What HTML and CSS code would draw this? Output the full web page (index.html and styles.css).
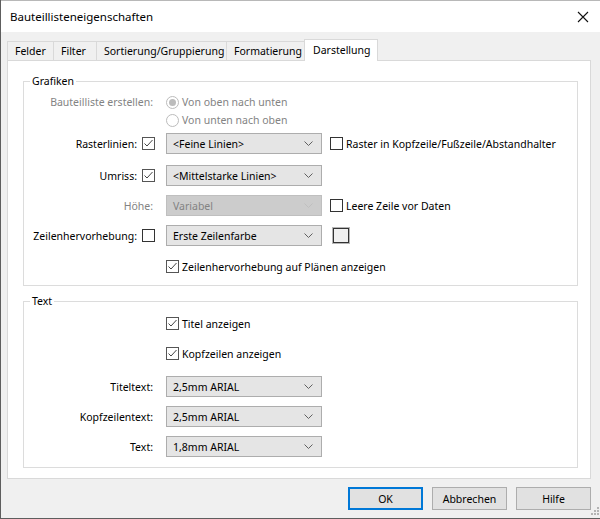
FILE: index.html
```html
<!DOCTYPE html>
<html lang="de">
<head>
<meta charset="utf-8">
<title>Bauteillisteneigenschaften</title>
<link rel="stylesheet" href="styles.css">
</head>
<body>
<div class="window">
  <div class="titlebar">
    <span class="title">Bauteillisteneigenschaften</span>
    <svg class="close" width="12" height="12" viewBox="0 0 12 12"><path d="M1 1L11 11M11 1L1 11" stroke="#111" stroke-width="1.1" fill="none"/></svg>
  </div>
  <div class="content">
    <div class="tabs">
      <div class="tab tab-felder">Felder</div>
      <div class="tab tab-filter">Filter</div>
      <div class="tab tab-sort">Sortierung/Gruppierung</div>
      <div class="tab tab-format">Formatierung</div>
      <div class="tab tab-active">Darstellung</div>
    </div>
    <div class="panel">
      <fieldset class="group group-graphics">
        <legend>Grafiken</legend>
        <div class="row row-radio row-first">
          <span class="label label-plain disabled">Bauteilliste erstellen:</span>
          <span class="radio disabled"><span class="radio-circle radio-checked"></span>Von oben nach unten</span>
        </div>
        <div class="row row-radio">
          <span class="label"></span>
          <span class="radio disabled"><span class="radio-circle"></span>Von unten nach oben</span>
        </div>
        <div class="row row-raster">
          <span class="label">Rasterlinien:<span class="cb cb-checked"><svg width="11" height="11" viewBox="0 0 11 11"><path d="M1.5 5.5L4 8L9.5 2" stroke="#444" stroke-width="1" fill="none"/></svg></span></span>
          <div class="select"><span>&lt;Feine Linien&gt;</span><svg class="chev" width="9" height="5" viewBox="0 0 9 5"><path d="M0.5 0.5L4.5 4.5L8.5 0.5" stroke="#606060" fill="none"/></svg></div>
          <span class="check"><span class="cb"></span>Raster in Kopfzeile/Fußzeile/Abstandhalter</span>
        </div>
        <div class="row row-outline">
          <span class="label">Umriss:<span class="cb cb-checked"><svg width="11" height="11" viewBox="0 0 11 11"><path d="M1.5 5.5L4 8L9.5 2" stroke="#444" stroke-width="1" fill="none"/></svg></span></span>
          <div class="select"><span>&lt;Mittelstarke Linien&gt;</span><svg class="chev" width="9" height="5" viewBox="0 0 9 5"><path d="M0.5 0.5L4.5 4.5L8.5 0.5" stroke="#606060" fill="none"/></svg></div>
          <span></span>
        </div>
        <div class="row row-std">
          <span class="label label-plain disabled">Höhe:</span>
          <div class="select select-disabled"><span>Variabel</span><svg class="chev" width="9" height="5" viewBox="0 0 9 5"><path d="M0.5 0.5L4.5 4.5L8.5 0.5" stroke="#bfbfbf" fill="none"/></svg></div>
          <span class="check"><span class="cb"></span>Leere Zeile vor Daten</span>
        </div>
        <div class="row row-std">
          <span class="label">Zeilenhervorhebung:<span class="cb"></span></span>
          <div class="select"><span>Erste Zeilenfarbe</span><svg class="chev" width="9" height="5" viewBox="0 0 9 5"><path d="M0.5 0.5L4.5 4.5L8.5 0.5" stroke="#606060" fill="none"/></svg></div>
          <span class="swatch"><span class="swatch-inner"></span></span>
        </div>
        <div class="row row-sheets">
          <span class="label"></span>
          <span class="check check-wide"><span class="cb cb-checked"><svg width="11" height="11" viewBox="0 0 11 11"><path d="M1.5 5.5L4 8L9.5 2" stroke="#444" stroke-width="1" fill="none"/></svg></span>Zeilenhervorhebung auf Plänen anzeigen</span>
        </div>
      </fieldset>

      <fieldset class="group group-text">
        <legend>Text</legend>
        <div class="row row-first">
          <span class="label"></span>
          <span class="check check-wide"><span class="cb cb-checked"><svg width="11" height="11" viewBox="0 0 11 11"><path d="M1.5 5.5L4 8L9.5 2" stroke="#444" stroke-width="1" fill="none"/></svg></span>Titel anzeigen</span>
        </div>
        <div class="row row-std">
          <span class="label"></span>
          <span class="check check-wide"><span class="cb cb-checked"><svg width="11" height="11" viewBox="0 0 11 11"><path d="M1.5 5.5L4 8L9.5 2" stroke="#444" stroke-width="1" fill="none"/></svg></span>Kopfzeilen anzeigen</span>
        </div>
        <div class="row row-font-first">
          <span class="label label-plain">Titeltext:</span>
          <div class="select"><span>2,5mm ARIAL</span><svg class="chev" width="9" height="5" viewBox="0 0 9 5"><path d="M0.5 0.5L4.5 4.5L8.5 0.5" stroke="#606060" fill="none"/></svg></div>
          <span></span>
        </div>
        <div class="row row-std">
          <span class="label label-plain">Kopfzeilentext:</span>
          <div class="select"><span>2,5mm ARIAL</span><svg class="chev" width="9" height="5" viewBox="0 0 9 5"><path d="M0.5 0.5L4.5 4.5L8.5 0.5" stroke="#606060" fill="none"/></svg></div>
          <span></span>
        </div>
        <div class="row row-std">
          <span class="label label-plain">Text:</span>
          <div class="select"><span>1,8mm ARIAL</span><svg class="chev" width="9" height="5" viewBox="0 0 9 5"><path d="M0.5 0.5L4.5 4.5L8.5 0.5" stroke="#606060" fill="none"/></svg></div>
          <span></span>
        </div>
      </fieldset>
    </div>
    <div class="buttons">
      <button class="btn btn-default">OK</button>
      <button class="btn">Abbrechen</button>
      <button class="btn">Hilfe</button>
    </div>
  </div>
  <svg class="grip" width="12" height="12" viewBox="0 0 12 12">
    <rect x="9" y="1" width="2" height="2" fill="#b4b4b4"/>
    <rect x="6" y="4" width="2" height="2" fill="#b4b4b4"/>
    <rect x="9" y="4" width="2" height="2" fill="#b4b4b4"/>
    <rect x="3" y="7" width="2" height="2" fill="#b4b4b4"/>
    <rect x="6" y="7" width="2" height="2" fill="#b4b4b4"/>
    <rect x="9" y="7" width="2" height="2" fill="#b4b4b4"/>
  </svg>
</div>
</body>
</html>
```

FILE: styles.css
```css
* { box-sizing: border-box; }
html, body { margin: 0; padding: 0; }
body {
  width: 600px;
  height: 519px;
  overflow: hidden;
  background: #f0f0f0;
  color: #000;
  font-family: "Noto Sans", "Open Sans", sans-serif;
  font-size: 10.5px;
}
.window {
  position: relative;
  width: 600px;
  height: 519px;
  display: flex;
  flex-direction: column;
  background: #f0f0f0;
  border-left: 1px solid #5e5e5e;
  border-bottom: 1px solid #5e5e5e;
}
.titlebar {
  height: 32px;
  flex: none;
  background: #fff;
  border-top: 1px solid #b8b8b8;
  display: flex;
  align-items: center;
  justify-content: space-between;
  padding: 0 11px 0 9px;
}
.title { font-size: 11.5px; }
.content {
  flex: 1;
  display: flex;
  flex-direction: column;
  padding: 7px 9px 0 6px;
}
.tabs {
  display: flex;
  align-items: flex-end;
  height: 21px;
}
.tab {
  height: 19px;
  line-height: 18px;
  padding-left: 7px;
  border: 1px solid #d9d9d9;
  border-bottom: none;
  background: #f0f0f0;
  margin-left: -1px;
  white-space: nowrap;
}
.tab-felder { width: 47px; margin-left: 0; }
.tab-filter { width: 44px; }
.tab-sort { width: 131px; }
.tab-format { width: 81px; }
.tab-active {
  position: relative;
  z-index: 1;
  width: 74px;
  height: 22px;
  line-height: 20px;
  margin-left: -3px;
  margin-bottom: -1px;
  padding-left: 8px;
  background: #fff;
}
.panel {
  height: 419px;
  flex: none;
  background: #fff;
  border: 1px solid #d9d9d9;
  padding: 13px 12px 0 15px;
}
.group {
  margin: 0;
  padding: 0 0 8px 0;
  border: 1px solid #dcdcdc;
  min-width: 0;
}
.group legend {
  margin-left: 6px;
  padding: 0 2px;
  line-height: 15px;
  height: 15px;
}
.group-text {
  margin-top: 8px;
  padding-bottom: 10px;
}
.row {
  display: grid;
  grid-template-columns: 142px 164px 1fr;
  align-items: center;
  height: 21px;
  margin-top: 9px;
}
.row-first { margin-top: 4px; }
.row-radio { height: 18px; margin-top: 0; }
.row-radio.row-first { margin-top: 4px; }
.row-raster { margin-top: 4px; }
.row-outline { margin-top: 11px; }
.row-sheets { margin-top: 10px; }
.row-font-first { margin-top: 12px; }
.label {
  display: flex;
  align-items: center;
  justify-content: flex-end;
  gap: 5px;
  padding-right: 11px;
  white-space: nowrap;
}
.label-plain { padding-right: 13px; }
.disabled { color: #838383; }
.radio {
  display: flex;
  align-items: center;
  gap: 3px;
  white-space: nowrap;
}
.radio-circle {
  width: 13px;
  height: 13px;
  border: 1px solid #bcbcbc;
  border-radius: 50%;
  background: #fff;
  display: flex;
  align-items: center;
  justify-content: center;
}
.radio-checked::after {
  content: "";
  width: 7px;
  height: 7px;
  border-radius: 50%;
  background: #bcbcbc;
}
.cb {
  flex: none;
  width: 13px;
  height: 13px;
  border: 1px solid #333;
  background: #fff;
  display: flex;
  align-items: center;
  justify-content: center;
}
.cb-checked { border-color: #555; }
.check {
  display: flex;
  align-items: center;
  gap: 3px;
  white-space: nowrap;
}
.check-wide { grid-column: 2 / 4; }
.select {
  width: 156px;
  height: 21px;
  border: 1px solid #adadad;
  background: #e5e5e5;
  display: flex;
  align-items: center;
  justify-content: space-between;
  padding: 0 8px 0 6px;
  white-space: nowrap;
}
.select-disabled {
  background: #cccccc;
  border-color: #bfbfbf;
  color: #838383;
}
.chev { flex: none; }
.swatch {
  margin-left: 2px;
  width: 18px;
  height: 17px;
  border: 1px solid #b5b5b5;
  display: flex;
}
.swatch-inner {
  flex: 1;
  border: 1px solid #333;
  background: #f0f0f0;
}
.buttons {
  display: flex;
  justify-content: flex-end;
  gap: 9px;
  margin-top: 8px;
  padding-right: 0;
}
.btn {
  width: 75px;
  height: 23px;
  border: 1px solid #adadad;
  background: #e1e1e1;
  font-family: "Noto Sans", "Open Sans", sans-serif;
  font-size: 10.5px;
  color: #000;
  padding: 0;
}
.btn-default { border: 2px solid #0078d7; }
.grip {
  position: absolute;
  right: 0;
  bottom: 0;
}
```
